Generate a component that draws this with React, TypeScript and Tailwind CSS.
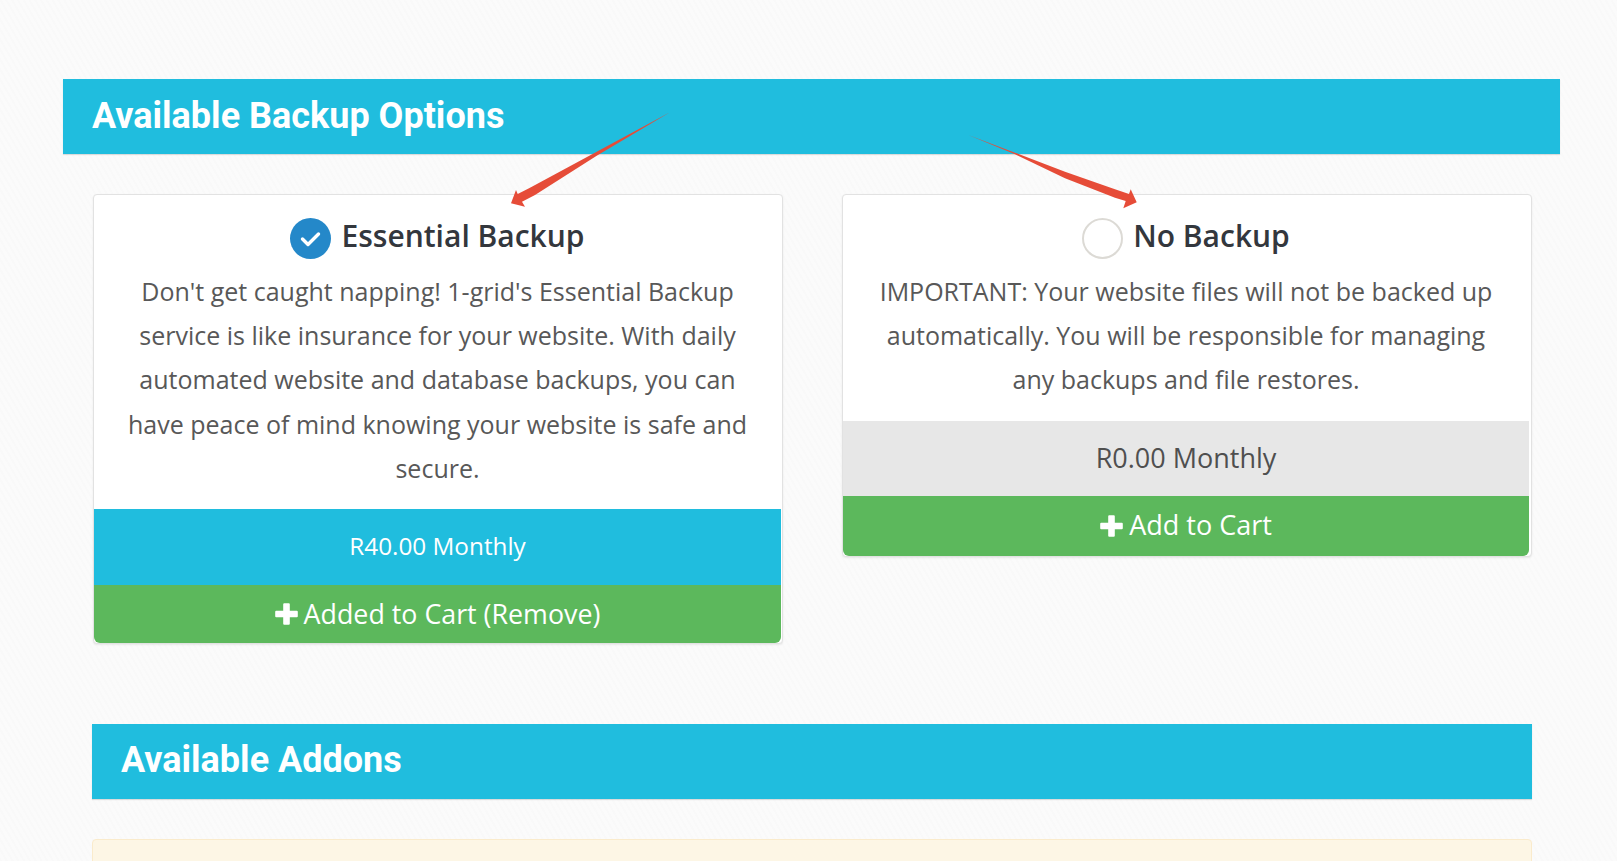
import React from "react";

function Plus() {
  return (
    <svg width="23" height="22" viewBox="0 0 23 22" className="shrink-0">
      <path d="M8.2 1.2a1 1 0 0 1 1-1h4.6a1 1 0 0 1 1 1v6.6h7a1 1 0 0 1 1 1v4.4a1 1 0 0 1-1 1h-7v6.6a1 1 0 0 1-1 1H9.2a1 1 0 0 1-1-1v-6.6h-7a1 1 0 0 1-1-1V8.800a1 1 0 0 1 1-1h7z" fill="#fff" />
    </svg>
  );
}

function Radio({ on }: { on: boolean }) {
  return on ? (
    <svg width="41" height="41" viewBox="0 0 41 41" className="mt-[4px] shrink-0">
      <circle cx="20.500" cy="20.500" r="20.500" fill="#2488c9" />
      <path d="M12.500 21l5.500 5.500 10.500-10.500" fill="none" stroke="#fff" strokeWidth="3.400" strokeLinecap="round" strokeLinejoin="round" />
    </svg>
  ) : (
    <div className="mt-[4px] h-[41px] w-[41px] shrink-0 rounded-full border-2 border-[#dcdad5] bg-white" />
  );
}

function Title({ children }: { children: React.ReactNode }) {
  return (
    <div className="flex h-[75px] items-center bg-[#20bdde] pb-[2px] pl-[29px] font-['Roboto',sans-serif] text-[36px] font-bold text-white shadow-[0_1px_1px_rgba(0,0,0,0.12)]">
      {children}
    </div>
  );
}

function Card(props: {
  on: boolean;
  name: string;
  lines: string[];
  price: string;
  priceClass: string;
  button: string;
  buttonClass: string;
  cardClass: string;
}) {
  return (
    <div className={`overflow-hidden rounded-[4px] border border-[#e2e2e2] bg-white shadow-[0_1px_2px_rgba(0,0,0,0.08)] ${props.cardClass}`}>
      <div className="pb-[19px] text-center">
        <div className="flex h-[74px] items-center justify-center gap-[10px] pt-[9px]">
          <Radio on={props.on} />
          <span className="pb-[2px] text-[30px] font-[550] text-[#33373d]">{props.name}</span>
        </div>
        {props.lines.map((l) => (
          <div key={l} className="h-[44.200px] text-[25px] leading-[44.200px] text-[#585858]">
            {l}
          </div>
        ))}
      </div>
      <div className={props.priceClass}>{props.price}</div>
      <div className={`flex items-center justify-center gap-[6px] rounded-b-[6px] bg-[#5cb85c] text-white ${props.buttonClass}`}>
        <Plus />
        <span>{props.button}</span>
      </div>
    </div>
  );
}

export default function App() {
  return (
    <div className="relative h-[861px] overflow-hidden bg-[#fbfbfb] bg-[repeating-linear-gradient(60deg,rgba(0,0,0,0.008)_0px,rgba(0,0,0,0.008)_2px,transparent_2px,transparent_5px)] pl-[63px] pr-[57px] pt-[79px] font-['Open_Sans',sans-serif]">
      <Title>Available Backup Options</Title>
      <div className="mt-[40px] grid grid-cols-[690px_690px] items-start gap-x-[59px] pl-[30px]">
        <Card
          on
          cardClass="pr-[1px]"
          name="Essential Backup"
          lines={[
            "Don't get caught napping! 1-grid's Essential Backup",
            "service is like insurance for your website. With daily",
            "automated website and database backups, you can",
            "have peace of mind knowing your website is safe and",
            "secure.",
          ]}
          price="R40.00 Monthly"
          priceClass="flex h-[76px] items-center justify-center bg-[#20bdde] pb-[1px] text-[24.300px] text-white"
          button="Added to Cart (Remove)"
          buttonClass="h-[58px] text-[26.800px]"
        />
        <Card
          on={false}
          cardClass="pr-[2px]"
          name="No Backup"
          lines={[
            "IMPORTANT: Your website files will not be backed up",
            "automatically. You will be responsible for managing",
            "any backups and file restores.",
          ]}
          price="R0.00 Monthly"
          priceClass="flex h-[75px] items-center justify-center bg-[#e7e7e7] text-[27px] text-[#4f4f4f]"
          button="Add to Cart"
          buttonClass="h-[60px] text-[27px]"
        />
      </div>
      <div className="ml-[29px] mr-[28px] mt-[80px]">
        <Title>Available Addons</Title>
      </div>
      <div className="ml-[29px] mr-[28px] mt-[40px] h-[60px] rounded-[4px] border border-[#faebcc] bg-[#fdf6e5]" />
      <svg className="pointer-events-none absolute left-0 top-0" width="1617" height="861">
        <polygon points="670,112.300 596.700,151.700 530,187.700 517.700,194 516,190 511,203.300 525,206.700 522,201.700 535,195 596.700,155.700" fill="#e64c38" />
        <polygon points="968.300,135 1015,152.700 1065,171.700 1115,189.300 1129,194 1130.700,189.300 1136.700,202.300 1123.300,208.300 1125.700,201 1115,197.700 1065,178.300 1015,154.300" fill="#e64c38" />
      </svg>
    </div>
  );
}
